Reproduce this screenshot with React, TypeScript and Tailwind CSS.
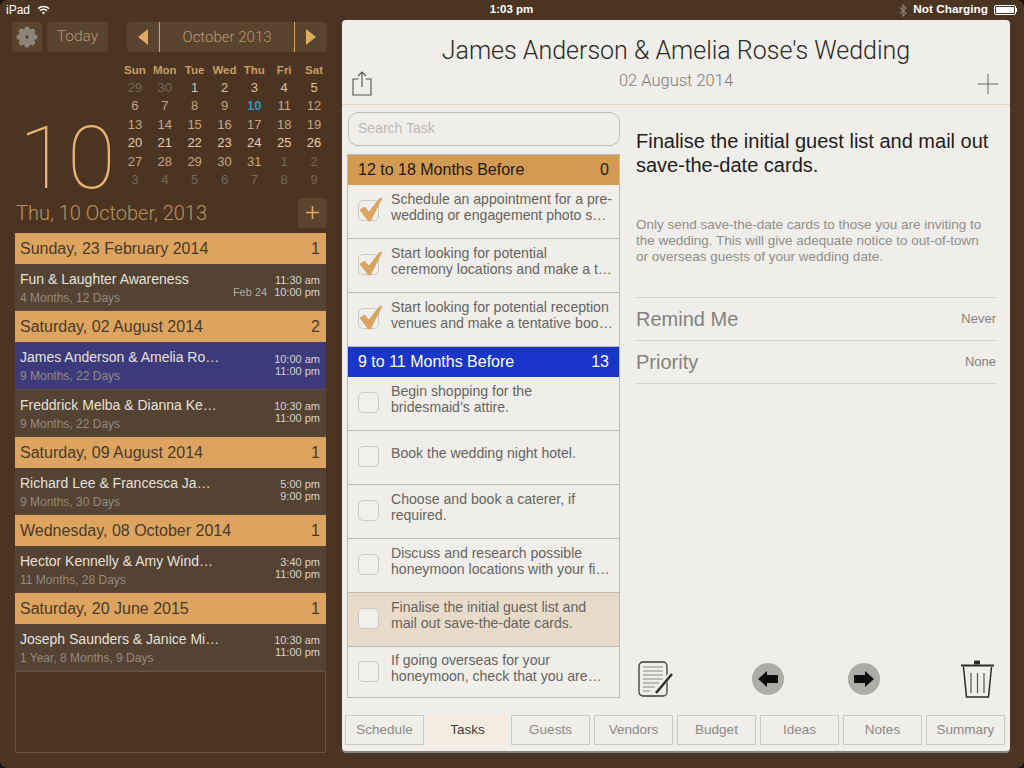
import { ReactNode } from 'react';

const sans = "font-['Liberation_Sans',Arial,sans-serif]";
const light = "font-['Roboto','Liberation_Sans',sans-serif] font-light";

const calendar = [
  ['29', '30', '1', '2', '3', '4', '5'],
  ['6', '7', '8', '9', '10', '11', '12'],
  ['13', '14', '15', '16', '17', '18', '19'],
  ['20', '21', '22', '23', '24', '25', '26'],
  ['27', '28', '29', '30', '31', '1', '2'],
  ['3', '4', '5', '6', '7', '8', '9'],
];

const eventGroups = [
  {
    date: 'Sunday, 23 February 2014',
    events: [{ name: 'Fun & Laughter Awareness', left: '4 Months, 12 Days', start: '11:30 am', end: '10:00 pm', endDate: 'Feb 24' }],
  },
  {
    date: 'Saturday, 02 August 2014',
    events: [
      { name: 'James Anderson & Amelia Ro…', left: '9 Months, 22 Days', start: '10:00 am', end: '11:00 pm', selected: true },
      { name: 'Freddrick Melba & Dianna Ke…', left: '9 Months, 22 Days', start: '10:30 am', end: '11:00 pm' },
    ],
  },
  {
    date: 'Saturday, 09 August 2014',
    events: [{ name: 'Richard Lee & Francesca Ja…', left: '9 Months, 30 Days', start: '5:00 pm', end: '9:00 pm' }],
  },
  {
    date: 'Wednesday, 08 October 2014',
    events: [{ name: 'Hector Kennelly & Amy Wind…', left: '11 Months, 28 Days', start: '3:40 pm', end: '11:00 pm' }],
  },
  {
    date: 'Saturday, 20 June 2015',
    events: [{ name: 'Joseph Saunders & Janice Mi…', left: '1 Year, 8 Months, 9 Days', start: '10:30 am', end: '11:00 pm' }],
  },
];

const doneTasks = [
  ['Schedule an appointment for a pre-', 'wedding or engagement photo s…'],
  ['Start looking for potential', 'ceremony locations and make a t…'],
  ['Start looking for potential reception', 'venues and make a tentative boo…'],
];

const openTasks = [
  ['Begin shopping for the', 'bridesmaid’s attire.'],
  ['Book the wedding night hotel.'],
  ['Choose and book a caterer, if', 'required.'],
  ['Discuss and research possible', 'honeymoon locations with your fi…'],
  ['Finalise the initial guest list and', 'mail out save-the-date cards.'],
  ['If going overseas for your', 'honeymoon, check that you are…'],
];

const tabs = ['Schedule', 'Tasks', 'Guests', 'Vendors', 'Budget', 'Ideas', 'Notes', 'Summary'];

function dayColor(row: number, col: number, day: string) {
  if (day === '10' && row === 1) return 'text-[#2f93c4] font-bold';
  if ((row === 0 && col < 2) || row === 5 || (row === 4 && col > 4)) return 'text-[#75685c]';
  if (row === 3) return 'text-[#e6cdb0]';
  if (row === 0 && col > 1) return 'text-[#d8c2a6]';
  return 'text-[#c4a684]';
}

function StatusBar() {
  return (
    <div className={`flex h-5 shrink-0 items-center justify-between pl-[6px] pr-[7px] text-[12px] text-white ${sans}`}>
      <div className="flex w-[300px] items-center gap-[7px]">
        <span>iPad</span>
        <svg width="13" height="10" viewBox="0 0 13 10" fill="none" stroke="white" strokeWidth="1.5">
          <path d="M1 3.6a8 8 0 0 1 11 0M3 5.8a5 5 0 0 1 7 0" />
          <path d="M4.9 7.6a2.3 2.3 0 0 1 3.2 0L6.5 9.5z" fill="white" stroke="none" />
        </svg>
      </div>
      <span className="font-bold text-[11.5px]">1:03 pm</span>
      <div className="flex w-[300px] items-center justify-end gap-[6px]">
        <svg width="8" height="13" viewBox="0 0 8 13" fill="none" stroke="#8b8178" strokeWidth="1.1">
          <path d="M1 3.5l6 5.5-3 3V1l3 3-6 5.5" />
        </svg>
        <span className="font-bold text-[11.8px]">Not Charging</span>
        <div className="flex items-center">
          <div className="h-[10px] w-[22px] rounded-[2px] border border-white p-[1px]">
            <div className="h-full w-full bg-white" />
          </div>
          <div className="h-[4px] w-[1px] bg-white" />
        </div>
      </div>
    </div>
  );
}

function ToolButton({ className, children }: { className: string; children: ReactNode }) {
  return <div className={`flex h-[30px] items-center justify-center rounded-[4px] bg-[#58442f] ${className}`}>{children}</div>;
}

function CalendarBlock() {
  return (
    <div className="flex h-[130px] shrink-0 pl-[7px]">
      <div className="flex w-[113px] items-end pl-[12px]">
        <span className="mb-[1px] text-[88px] leading-[66px] font-thin text-[#e8b36f] font-['Roboto','Liberation_Sans',sans-serif]">10</span>
      </div>
      <div className={`w-[209px] ${sans}`}>
        <div className="grid h-[15.5px] grid-cols-7 items-center text-center text-[11.5px] font-bold text-[#c99c66]">
          {['Sun', 'Mon', 'Tue', 'Wed', 'Thu', 'Fri', 'Sat'].map((d) => (
            <span key={d}>{d}</span>
          ))}
        </div>
        {calendar.map((week, r) => (
          <div key={r} className="grid h-[18.6px] grid-cols-7 items-center text-center text-[13px]">
            {week.map((day, c) => (
              <span key={c} className={dayColor(r, c, day)}>
                {day}
              </span>
            ))}
          </div>
        ))}
      </div>
    </div>
  );
}

function EventRow({ event }: { event: (typeof eventGroups)[number]['events'][number] }) {
  return (
    <div className={`flex items-center border-b border-[#5e4a39] pl-[5px] pr-[6px] ${sans} ${event.selected ? 'h-[48px] bg-[#3d3a7c]' : 'h-[47px] bg-[#544232]'}`}>
      <div className="min-w-0 flex-1 pt-[1px]">
        <div className="whitespace-nowrap text-[14px] leading-[20px] text-[#e6e1db]">{event.name}</div>
        <div className="mt-[1px] text-[12px] leading-[17px] text-[#968a80]">{event.left}</div>
      </div>
      <div className="-mt-[2px] text-right text-[11px] leading-[12px] text-[#d8d2cc]">
        <div>{event.start}</div>
        <div>
          {event.endDate && <span className="mr-[7px] text-[#b5ada5]">{event.endDate}</span>}
          {event.end}
        </div>
      </div>
    </div>
  );
}

function Sidebar() {
  return (
    <aside className="flex w-[342px] shrink-0 flex-col">
      <div className={`mt-[2px] flex pl-3 text-[#b89a74] ${light}`}>
        <ToolButton className="w-[30px]">
          <svg width="22" height="22" viewBox="0 0 22 22" fill="#8e8478">
            {[0, 45, 90, 135, 180, 225, 270, 315].map((a) => (
              <ellipse key={a} cx="11" cy="4.6" rx="3" ry="4.2" transform={`rotate(${a} 11 11)`} />
            ))}
            <circle cx="11" cy="11" r="5" />
            <circle cx="11" cy="11" r="1.8" fill="#58442f" />
          </svg>
        </ToolButton>
        <ToolButton className="ml-[5px] w-[61px] text-[15.5px]">Today</ToolButton>
        <div className="ml-[19px] flex h-[30px] w-[200px] items-center rounded-[4px] bg-[#58442f] text-[15px]">
          <div className="flex h-full w-[33px] items-center justify-center border-r border-[#dca45f]">
            <div className="h-0 w-0 border-y-[8px] border-r-[10px] border-y-transparent border-r-[#e0a964]" />
          </div>
          <div className="flex-1 text-center">October 2013</div>
          <div className="flex h-full w-[33px] items-center justify-center border-l border-[#dca45f]">
            <div className="h-0 w-0 border-y-[8px] border-l-[10px] border-y-transparent border-l-[#e0a964]" />
          </div>
        </div>
      </div>
      <div className="mt-[10px]">
        <CalendarBlock />
      </div>
      <div className="ml-4 mr-[15px] flex h-[41px] items-center justify-between">
        <span className={`text-[20px] text-[#b8935f] ${light}`}>Thu, 10 October, 2013</span>
        <ToolButton className="w-[29px]">
          <svg width="15" height="15" viewBox="0 0 15 15" stroke="#e0a964" strokeWidth="1.6">
            <path d="M7.5 1v13M1 7.5h13" />
          </svg>
        </ToolButton>
      </div>
      <div className="ml-[15px] flex h-[520px] w-[311px] flex-col">
        {eventGroups.map((group) => (
          <div key={group.date}>
            <div className={`flex h-[31px] items-center justify-between bg-[#dca45f] pl-[5px] pr-[6px] text-[16px] text-[#4a3a2a] ${sans}`}>
              <span>{group.date}</span>
              <span>{group.events.length}</span>
            </div>
            {group.events.map((event) => (
              <EventRow key={event.name} event={event} />
            ))}
          </div>
        ))}
        <div className="flex-1 border border-[#665340]" />
      </div>
    </aside>
  );
}

function Checkbox({ checked }: { checked?: boolean }) {
  return (
    <div className="relative mt-[-2px] h-[21px] w-[21px] shrink-0 rounded-[5px] border border-[#ccc9c3] bg-[#f1efeb]">
      {checked && (
        <svg className="absolute -top-[5px] left-0" width="25" height="26" viewBox="0 0 25 26" fill="#dba55f" stroke="#c58c46" strokeWidth="0.5">
          <path d="M1 14l4.500-3 4.500 5L20 3l3-1-9 18-2.500 5h-2z" />
        </svg>
      )}
    </div>
  );
}

function TaskRow({ lines, checked, active, last }: { lines: string[]; checked?: boolean; active?: boolean; last?: boolean }) {
  return (
    <div className={`flex items-center gap-[12px] pl-[10px] pr-1 ${last ? 'h-[50px]' : 'h-[54px] border-b border-[#bdbbb5]'} ${active ? 'bg-[#e9dbc9]' : ''}`}>
      <Checkbox checked={checked} />
      <div className="mt-[-9px] text-[14.1px] leading-[16px] text-[#666460]">
        {lines.map((line) => (
          <div key={line} className="whitespace-nowrap">{line}</div>
        ))}
      </div>
    </div>
  );
}

function TaskColumn() {
  return (
    <div className={`flex w-[273px] shrink-0 flex-col pt-[7px] ${sans}`}>
      <div className="ml-px flex h-[34px] items-center rounded-[10px] border border-[#bdbcb8] pb-[1px] pl-[9px] text-[14px] text-[#bcbab5]">Search Task</div>
      <div className="mt-2 border border-[#bdbbb5] border-t-[#bdbbb5]">
        <div className="flex h-[30px] items-center justify-between bg-[#d39a52] pl-[10px] pr-[10px] text-[16px] text-[#1d1a16]">
          <span>12 to 18 Months Before</span>
          <span>0</span>
        </div>
        {doneTasks.map((lines) => (
          <TaskRow key={lines[0]} lines={lines} checked />
        ))}
        <div className="flex h-[30px] items-center justify-between bg-[#1a36c8] pl-[10px] pr-[10px] text-[16px] text-white">
          <span>9 to 11 Months Before</span>
          <span>13</span>
        </div>
        {openTasks.map((lines, i) => (
          <TaskRow key={lines[0]} lines={lines} active={i === 4} last={i === 5} />
        ))}
      </div>
    </div>
  );
}

function RoundArrow({ flip }: { flip?: boolean }) {
  return (
    <div className="flex h-[32px] w-[32px] items-center justify-center rounded-full bg-[#aeaca8]">
      <svg width="22" height="18" viewBox="0 0 22 18" fill="#0c0c0c" className={flip ? 'rotate-180' : ''}>
        <path d="M1 9l9-8v4h11v8H10v4z" />
      </svg>
    </div>
  );
}

function TaskDetail() {
  return (
    <div className={`flex min-w-0 flex-1 flex-col pl-4 pr-[14px] ${sans}`}>
      <div className="mt-[25px] text-[20px] leading-[23.5px] text-[#1e1d1b]">
        Finalise the initial guest list and mail out save-the-date cards.
      </div>
      <div className="mt-[40px] pr-[10px] text-[13.5px] leading-[16px] text-[#8f8d88]">
        Only send save-the-date cards to those you are inviting to the wedding. This will give adequate notice to out-of-town or overseas guests of your wedding date.
      </div>
      <div className="mt-[32px] border-t border-[#d4d2cd]">
        <div className="flex h-[43px] items-center justify-between border-b border-[#d4d2cd] text-[#84827d]">
          <span className="text-[20px]">Remind Me</span>
          <span className="text-[13px]">Never</span>
        </div>
        <div className="flex h-[43px] items-center justify-between border-b border-[#d4d2cd] text-[#84827d]">
          <span className="text-[20px]">Priority</span>
          <span className="text-[13px]">None</span>
        </div>
      </div>
      <div className="mt-auto flex items-center pl-[2px]">
        <svg width="36" height="36" viewBox="0 0 36 36" fill="none" stroke="#3a3a38" strokeWidth="1.3">
          <rect x="1" y="1" width="28" height="34" rx="4" />
          <path d="M5 6h20M5 10h20M5 14h20M5 18h20M5 22h16M5 26h12M5 30h7" stroke="#8a8884" strokeWidth="1" />
          <path d="M33 13L17 32" stroke="#f0eeea" strokeWidth="5" />
          <path d="M34 13L18 32" stroke="#2b2b2a" strokeWidth="2.500" />
        </svg>
        <div className="ml-[78px]"><RoundArrow /></div>
        <div className="ml-[64px]"><RoundArrow flip /></div>
        <svg className="ml-auto mr-[2px]" width="33" height="38" viewBox="0 0 33 38" fill="none" stroke="#2a2a28" strokeWidth="1.500">
          <path d="M0 5.500h33" strokeWidth="2" />
          <rect x="13" y="0.500" width="6" height="4" rx="1" fill="#2a2a28" stroke="none" />
          <path d="M2.500 7l3 30h22l3-30" />
          <path d="M10 13v20M16.500 13v20M23 13v20" stroke="#555" strokeWidth="1.200" />
        </svg>
      </div>
    </div>
  );
}

function MainPanel() {
  return (
    <main className="flex h-[731px] w-[668px] shrink-0 flex-col rounded-[4px] bg-[#f0eeea] shadow-[0_2px_0_#8a8580]">
      <header className={`relative h-[85px] shrink-0 border-b border-[#e8d5c0] text-center ${light}`}>
        <h1 className="pt-[15px] text-[25px] leading-[32px] text-[#2a2927]">James Anderson &amp; Amelia Rose's Wedding</h1>
        <p className="mt-[5px] text-[16.5px] leading-[18px] text-[#7e7c78]">02 August 2014</p>
        <svg className="absolute bottom-[8px] left-[10px]" width="21" height="25" viewBox="0 0 21 25" fill="none" stroke="#55534f" strokeWidth="1.1">
          <path d="M6.500 8H1v16h18V8h-5.500M10 16V1M6 5l4-4 4 4" />
        </svg>
        <svg className="absolute bottom-[10px] right-[12px]" width="20" height="20" viewBox="0 0 20 20" stroke="#6b6965" strokeWidth="1">
          <path d="M10 0v20M0 10h20" />
        </svg>
      </header>
      <div className="flex min-h-0 flex-1 pl-[5px]">
        <TaskColumn />
        <TaskDetail />
      </div>
      <nav className={`mb-[6px] mt-[17px] flex gap-1 pl-[3px] ${sans}`}>
        {tabs.map((tab) => (
          <div
            key={tab}
            className={`flex h-[30px] w-[79px] items-center justify-center border text-[13.5px] ${tab === 'Tasks' ? 'border-[#f5ecdf] bg-[#f5ecdf] text-[#3a3a38]' : 'border-[#cbc9c4] text-[#8b8985]'}`}
          >
            {tab}
          </div>
        ))}
      </nav>
    </main>
  );
}

export default function App() {
  return (
    <div className="h-[768px] w-[1024px] overflow-hidden bg-[#141008]">
      <div className="flex h-full w-full flex-col rounded-[7px] bg-[#4b3522]">
        <StatusBar />
        <div className="flex">
          <Sidebar />
          <MainPanel />
        </div>
      </div>
    </div>
  );
}
